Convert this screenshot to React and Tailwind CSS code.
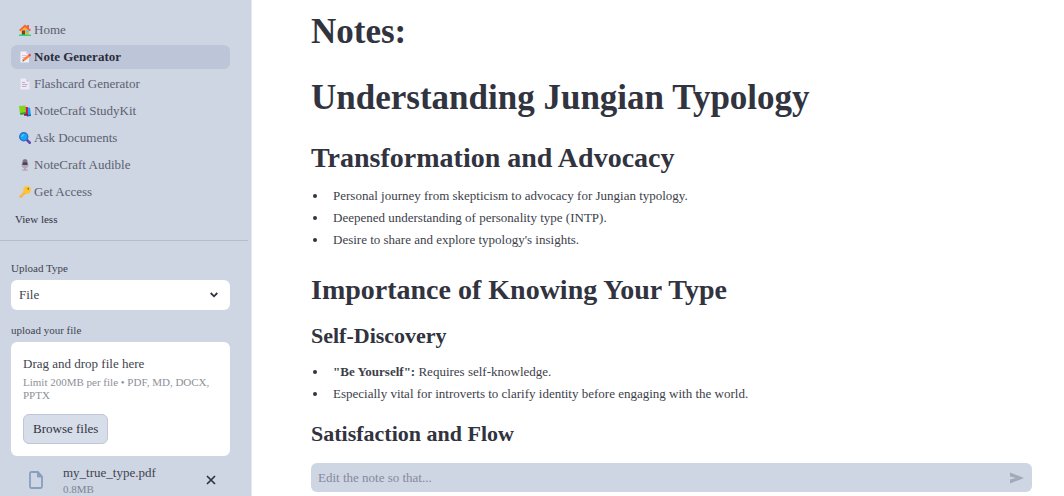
import React from "react";

function HomeIcon() {
  return (
    <svg viewBox="0 0 24 24" className="size-3" aria-hidden="true">
      <path d="M16 2h4v7h-4z" fill="#e0655a" />
      <path d="M4 11 12 4l8 7v11H4z" fill="#ffb02e" />
      <path d="M0 12 12 1l12 11-2.500 2.500L12 6 2.500 14.500z" fill="#f8613f" />
      <path d="M6 13h6v9H6z" fill="#6d4534" />
      <path d="M14 12h5v5h-5z" fill="#5fc3f5" />
      <path d="M0 21h24v3H0z" fill="#1ddb8b" />
    </svg>
  );
}

function MemoIcon() {
  return (
    <svg viewBox="0 0 24 24" className="size-3" aria-hidden="true">
      <path d="M3 1h12l5 5v17H3z" fill="#f4eefa" />
      <path d="M15 1v5h5z" fill="#cdbfd8" />
      <path d="M6 8h9v1.500H6zM6 12h7v1.500H6zM6 16h4v1.500H6z" fill="#c4b6d2" />
      <path d="m7 21 2-6 10-8 3 4-10 8z" fill="#ff8430" />
      <path d="m18.500 7.500 2.500-2c1-.5 3.500 2.500 3 3.500L21.500 11z" fill="#f1376d" />
      <path d="m7 21 1-3 2 2z" fill="#5c3a3a" />
    </svg>
  );
}

function PageIcon() {
  return (
    <svg viewBox="0 0 24 24" className="size-3" aria-hidden="true">
      <path d="M3 1h12l6 6v16H3z" fill="#f1e8f5" />
      <path d="M15 1v6h6z" fill="#cbbdd6" />
      <path d="M6 8h6v1.500H6zM6 12h11v1.500H6zM6 16h9v1.500H6z" fill="#a99bb8" />
    </svg>
  );
}

function BooksIcon() {
  return (
    <svg viewBox="0 0 24 24" className="size-3" aria-hidden="true">
      <path d="m15 6 7-1 2 16-8 2z" fill="#12a5f4" />
      <path d="M15 20 24 19v3l-8 1z" fill="#2466b8" />
      <path d="M10 4h8v17h-8z" fill="#d71558" />
      <path d="M10 18h8v3h-8z" fill="#8c1252" />
      <path d="m0 2 13-1 1 15-12 2z" fill="#83d61d" />
      <path d="m2 16 12-2v4L3 20z" fill="#369b32" />
    </svg>
  );
}

function MagnifierIcon() {
  return (
    <svg viewBox="0 0 24 24" className="size-3" aria-hidden="true">
      <path d="m16 16 5.500 5.500" stroke="#6545b0" strokeWidth="5" strokeLinecap="round" />
      <circle cx="9.500" cy="9.500" r="8" fill="#12a9f5" stroke="#2c74d0" strokeWidth="3" />
      <path d="M5.500 9c.5-2 2-3.500 4-3.500" stroke="#83dbff" strokeWidth="2" fill="none" strokeLinecap="round" />
    </svg>
  );
}

function MicrophoneIcon() {
  return (
    <svg viewBox="0 0 24 24" className="size-3" aria-hidden="true">
      <rect x="7" y="0" width="10" height="12" rx="5" fill="#8d8193" />
      <path d="M8 4h8M8 7h8M10.500 2v8M13.500 2v8" stroke="#6b6070" strokeWidth="1" />
      <path d="M5 9h14v3c0 4-3 6-5 6.500V21h4v2.500H6V21h4v-2.500C8 18 5 16 5 12z" fill="#b3a5ba" />
      <path d="M7 7h10v5H7z" fill="#4d4350" />
    </svg>
  );
}

function KeyIcon() {
  return (
    <svg viewBox="0 0 24 24" className="size-3" aria-hidden="true">
      <path d="M12 9 1 20v3h4l2-2v-2h2v-2h2l5-4z" fill="#f9a72b" />
      <path d="M10.500 11 1 20v2.500L14 11z" fill="#ffcb3d" />
      <circle cx="16" cy="8" r="7.500" fill="#ffc52e" />
      <circle cx="18.500" cy="5.500" r="1.800" fill="#a56b28" />
    </svg>
  );
}

const pages = [
  { name: "Home", Icon: HomeIcon },
  { name: "Note Generator", Icon: MemoIcon, active: true },
  { name: "Flashcard Generator", Icon: PageIcon },
  { name: "NoteCraft StudyKit", Icon: BooksIcon },
  { name: "Ask Documents", Icon: MagnifierIcon },
  { name: "NoteCraft Audible", Icon: MicrophoneIcon },
  { name: "Get Access", Icon: KeyIcon },
];

function Sidebar() {
  return (
    <aside className="w-[252px] shrink-0 overflow-hidden border-r border-[#e3e7ef] bg-[#ced5e3]">
      <nav className="flex flex-col gap-[3px] pt-[18px] pr-[21px] pl-[11px]" aria-label="Pages">
        {pages.map(({ name, Icon, active }) => (
          <a
            key={name}
            href="#"
            aria-current={active ? "page" : undefined}
            className={
              active
                ? "flex h-6 items-center gap-[3px] rounded-md bg-[#bdc6d9] pl-2 text-[13px] font-bold text-[#2b2d3a]"
                : "flex h-6 items-center gap-[3px] rounded-md pl-2 text-[13px] text-[#5c616e]"
            }
          >
            <Icon />
            {name}
          </a>
        ))}
      </nav>
      <button type="button" className="mt-[7px] ml-[15px] block text-[11px] leading-4 text-[#31333f]">
        View less
      </button>
      <hr className="mt-[13px] mr-[3px] border-[#b5bdcc]" />

      <div className="flex flex-col pt-[19px] pr-[21px] pl-[11px]">
        <label htmlFor="upload-type" className="text-[11px] leading-4 text-[#41444f]">
          Upload Type
        </label>
        <div className="relative mt-1">
          <select
            id="upload-type"
            className="h-[30px] w-full appearance-none rounded-md bg-white px-2 text-[13px] text-[#41444f]"
          >
            <option>File</option>
          </select>
          <svg
            viewBox="0 0 8 6"
            className="pointer-events-none absolute top-3 right-3 h-[6px] w-2"
            fill="none"
            stroke="#31333f"
            strokeWidth="1.800"
            aria-hidden="true"
          >
            <path d="m.7 1 3.300 3.300L7.300 1" />
          </svg>
        </div>

        <h2 className="mt-3 text-[11px] leading-4 text-[#41444f]">upload your file</h2>
        <section className="mt-1 rounded-md bg-white p-3" aria-label="upload your file">
          <p className="text-[13px] leading-5 text-[#41444f]">Drag and drop file here</p>
          <p className="mt-[2px] text-[11px] leading-[13px] text-[#8d9099]">
            Limit 200MB per file • PDF, MD, DOCX, PPTX
          </p>
          <button
            type="button"
            className="mt-3 h-[30px] rounded-md border border-[#bfc6d5] bg-[#d7dde9] px-[9px] text-[13px] text-[#31333f]"
          >
            Browse files
          </button>
        </section>
        <div className="mt-2 flex items-center pr-3 pl-[18px]">
          <svg viewBox="0 0 14 18" className="h-[18px] w-[14px]" fill="none" stroke="#8b9ec0" strokeWidth="1.800" aria-hidden="true">
            <path d="M1 2.500C1 1.600 1.600 1 2.500 1H9l4 4.500v10c0 .9-.6 1.500-1.500 1.500h-9C1.600 17 1 16.400 1 15.500z" />
            <path d="M8.500 1v5H13z" fill="#8b9ec0" strokeWidth="1" />
          </svg>
          <div className="ml-5 grow">
            <p className="text-[13px] leading-[18px] text-[#41444f]">my_true_type.pdf</p>
            <p className="text-[11px] leading-[14px] text-[#7e8492]">0.8MB</p>
          </div>
          <button type="button" aria-label="Remove my_true_type.pdf" className="p-[2px]">
            <svg viewBox="0 0 10 10" className="size-[10px]" stroke="#31333f" strokeWidth="1.700" aria-hidden="true">
              <path d="m1 1 8 8M9 1 1 9" />
            </svg>
          </button>
        </div>
      </div>
    </aside>
  );
}

function Bullets({ children }) {
  return <ul className="mt-3 flex flex-col gap-[2px] text-[13px] leading-5 text-[#3c3e4a]">{children}</ul>;
}

function Bullet({ children }) {
  return (
    <li className="flex items-center">
      <span className="mr-4 ml-[2px] size-1 rounded-full bg-[#31333f]" />
      <span>{children}</span>
    </li>
  );
}

export default function App() {
  return (
    <div className="flex h-screen overflow-hidden bg-white font-['Liberation_Serif',serif] text-[#31333f]">
      <Sidebar />
      <main className="flex min-w-0 grow flex-col pr-8 pb-1 pl-[59px]">
        <div className="min-h-0 grow overflow-hidden pt-3">
          <h1 className="text-[35px] leading-10 font-bold">Notes:</h1>
          <h1 className="mt-[26px] text-[35px] leading-10 font-bold">Understanding Jungian Typology</h1>
          <h2 className="mt-6 text-[28px] leading-8 font-bold">Transformation and Advocacy</h2>
          <Bullets>
            <Bullet>Personal journey from skepticism to advocacy for Jungian typology.</Bullet>
            <Bullet>Deepened understanding of personality type (INTP).</Bullet>
            <Bullet>Desire to share and explore typology's insights.</Bullet>
          </Bullets>
          <h2 className="mt-6 text-[28px] leading-8 font-bold">Importance of Knowing Your Type</h2>
          <h3 className="mt-4 text-[22px] leading-7 font-bold">Self-Discovery</h3>
          <Bullets>
            <Bullet>
              <strong>"Be Yourself":</strong> Requires self-knowledge.
            </Bullet>
            <Bullet>Especially vital for introverts to clarify identity before engaging with the world.</Bullet>
          </Bullets>
          <h3 className="mt-4 text-[22px] leading-7 font-bold">Satisfaction and Flow</h3>
        </div>
        <form className="flex h-[29px] shrink-0 items-center rounded-md bg-[#ced5e3] pr-2 pl-[7px]">
          <input
            type="text"
            aria-label="Edit the note"
            placeholder="Edit the note so that..."
            className="min-w-0 grow bg-transparent text-[13px] placeholder:text-[#858a9b]"
          />
          <button type="button" aria-label="Send">
            <svg viewBox="0 0 14 12" className="h-3 w-[14px]" fill="#a2a9b9" aria-hidden="true">
              <path d="M0 0.500 14 6 0 11.500V7.500L6 6 0 4.500z" />
            </svg>
          </button>
        </form>
      </main>
    </div>
  );
}
